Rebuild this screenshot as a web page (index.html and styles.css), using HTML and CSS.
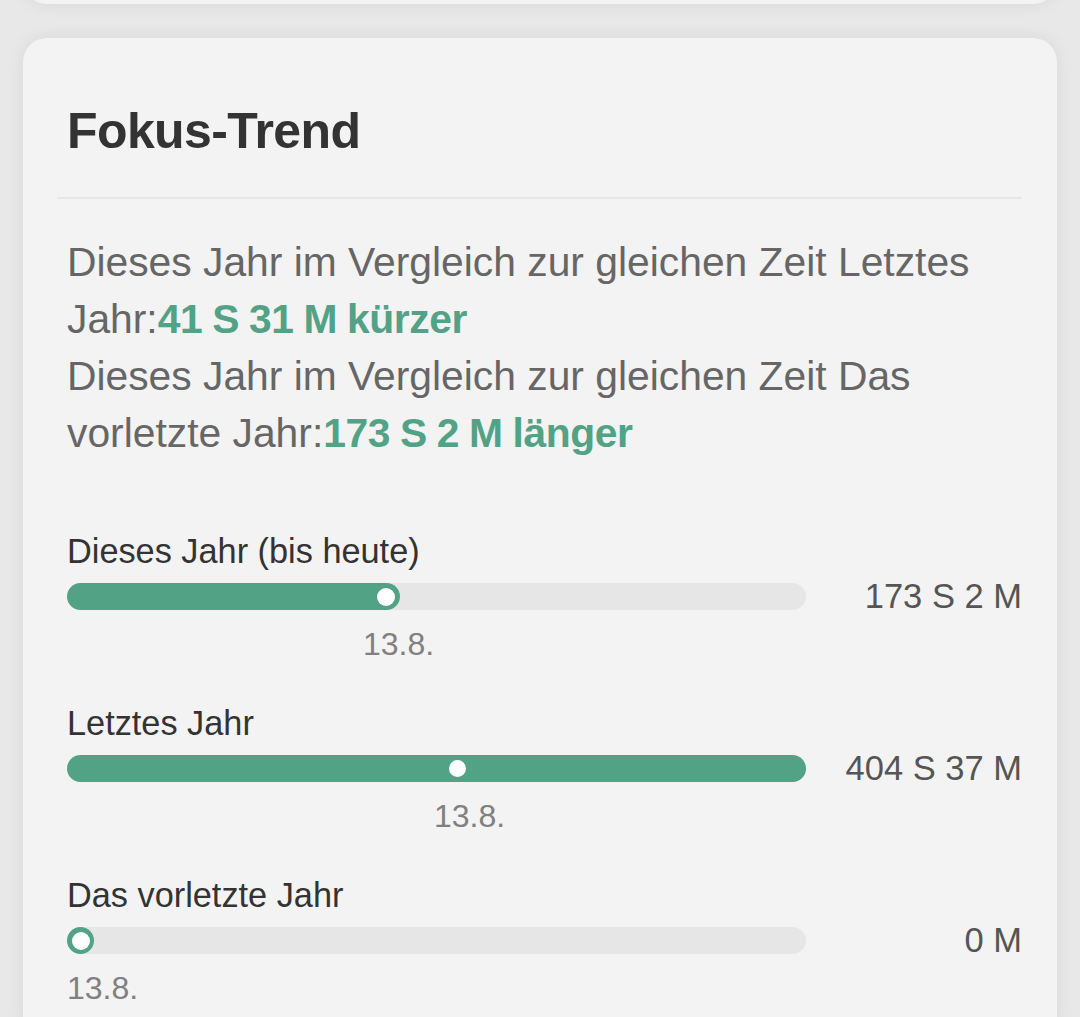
FILE: index.html
```html
<!DOCTYPE html>
<html lang="de">
<head>
<meta charset="utf-8">
<title>Fokus-Trend</title>
<link rel="stylesheet" href="styles.css">
</head>
<body>
<div class="page">
  <div class="card card-top"></div>
  <section class="card card-main">
    <h2 class="title">Fokus-Trend</h2>
    <div class="divider"></div>
    <div class="content">
      <p class="compare">Dieses Jahr im Vergleich zur gleichen Zeit Letztes Jahr:<b>41 S 31 M kürzer</b><br>Dieses Jahr im Vergleich zur gleichen Zeit Das vorletzte Jahr:<b>173 S 2 M länger</b></p>

      <div class="row row-first">
        <div class="row-label">Dieses Jahr (bis heute)</div>
        <div class="row-bar">
          <div class="track">
            <div class="fill" style="width:45%"></div>
            <span class="knob" style="left:43.1%"></span>
          </div>
          <div class="value">173 S 2 M</div>
        </div>
        <div class="row-date"><span style="margin-left:296px">13.8.</span></div>
      </div>

      <div class="row">
        <div class="row-label">Letztes Jahr</div>
        <div class="row-bar">
          <div class="track">
            <div class="fill" style="width:100%"></div>
            <span class="knob knob-small" style="left:52.85%"></span>
          </div>
          <div class="value">404 S 37 M</div>
        </div>
        <div class="row-date"><span style="margin-left:367px">13.8.</span></div>
      </div>

      <div class="row">
        <div class="row-label">Das vorletzte Jahr</div>
        <div class="row-bar">
          <div class="track">
            <div class="fill" style="width:27px"></div>
            <span class="knob" style="left:13.5px"></span>
          </div>
          <div class="value">0 M</div>
        </div>
        <div class="row-date"><span style="margin-left:0">13.8.</span></div>
      </div>
    </div>
  </section>
</div>
</body>
</html>
```
FILE: styles.css
```css
html, body {
  margin: 0;
  padding: 0;
}
body {
  background: #e8e8e8;
  font-family: "Liberation Sans", Arial, sans-serif;
}
.page {
  padding: 0 23px;
  height: 1017px;
  overflow: hidden;
}
.card {
  background: #f3f3f3;
  border-radius: 24px;
  box-shadow: 0 0 18px rgba(0, 0, 0, 0.07);
}
.card-top {
  height: 100px;
  margin-top: -96px;
}
.card-main {
  margin-top: 34px;
  padding: 63px 35px 40px 34px;
}
.title {
  margin: 0 0 36px 10px;
  font-size: 50px;
  line-height: 60px;
  font-weight: 700;
  letter-spacing: -0.6px;
  color: #333;
}
.divider {
  height: 2px;
  background: #e6e6e6;
}
.content {
  padding-left: 10px;
}
.compare {
  margin: 35px 0 0;
  font-size: 40.8px;
  line-height: 57px;
  color: #666;
}
.compare b {
  color: #52a285;
  font-weight: 700;
  letter-spacing: -0.4px;
  word-spacing: -1px;
}
.row {
  margin-top: 41px;
}
.row-first {
  margin-top: 69px;
}
.row-label {
  font-size: 34.3px;
  line-height: 40px;
  color: #333;
}
.row-bar {
  display: flex;
  align-items: center;
  margin-top: 12px;
  height: 27px;
}
.track {
  position: relative;
  flex: 1;
  height: 27px;
  border-radius: 14px;
  background: #e6e6e6;
}
.fill {
  height: 100%;
  border-radius: 14px;
  background: #52a285;
}
.knob {
  position: absolute;
  top: 50%;
  width: 18px;
  height: 18px;
  margin: -9px 0 0 -9px;
  border-radius: 50%;
  background: #fff;
}
.knob-small {
  width: 17px;
  height: 17px;
  margin: -8.5px 0 0 -8.5px;
}
.value {
  width: 216px;
  text-align: right;
  font-size: 34.5px;
  line-height: 27px;
  color: #555;
}
.row-date {
  margin-top: 16px;
  font-size: 32px;
  line-height: 36px;
  color: #808080;
}
```
